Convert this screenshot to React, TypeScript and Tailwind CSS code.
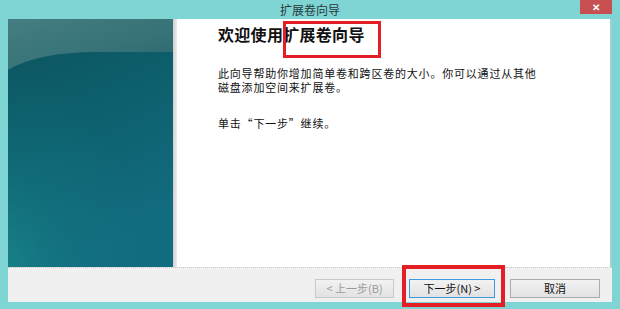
import React, { FC } from "react";

const cjk = "font-['Noto_Sans_CJK_SC','Noto_Sans',sans-serif]";

// decorative side picture of the wizard
const SidePanel: FC = () => {
	return (
		<svg width="165" height="248" viewBox="0 0 165 248" className="block">
			<defs>
				<linearGradient id="body" x1="0" y1="0" x2="0.3" y2="1">
					<stop offset="0" stopColor="#0b525c" />
					<stop offset="0.45" stopColor="#0d5f6c" />
					<stop offset="1" stopColor="#126c80" />
				</linearGradient>
				<radialGradient id="glow" cx="0" cy="1" r="0.8">
					<stop offset="0" stopColor="#188589" stopOpacity="0.8" />
					<stop offset="0.5" stopColor="#157b84" stopOpacity="0.3" />
					<stop offset="1" stopColor="#157b84" stopOpacity="0" />
				</radialGradient>
				<linearGradient id="cap" x1="0" y1="0" x2="1" y2="1">
					<stop offset="0" stopColor="#457e82" />
					<stop offset="1" stopColor="#2c6a70" />
				</linearGradient>
			</defs>
			<rect width="165" height="248" fill="url(#body)" />
			<rect width="165" height="248" fill="url(#glow)" />
			<path d="M0,51 Q30,33 90,33 L165,33 L165,0 L0,0 Z" fill="url(#cap)" />
		</svg>
	);
};

interface BtnProps {
	label: string;
	width: string;
	disabled?: boolean;
	focused?: boolean;
}

const WizButton: FC<BtnProps> = ({ label, width, disabled, focused }) => {
	return (
		<div
			className={`${width} h-[19px] flex items-center justify-center text-[11px] leading-none bg-gradient-to-b from-[#f2f2f2] to-[#e2e2e2] border ${
				focused
					? "border-[#3c9ae0] text-[#111]"
					: disabled
					? "border-[#c9c9c9] text-[#9b9b9b]"
					: "border-[#acacac] text-[#111]"
			}`}
		>
			{label}
		</div>
	);
};

const App: FC = () => {
	return (
		<div className={`relative w-[620px] h-[309px] bg-[#7fd4d4] flex flex-col overflow-hidden ${cjk}`}>
			{/* title bar */}
			<div className="h-[19px] flex items-start">
				<div className="w-[40px]" />
				<div className="flex-1 text-center text-[12px] leading-[19px] text-[#2a3a3a]">扩展卷向导</div>
				<div className="w-[32px] h-[14px] mr-[8px] bg-[#c84f4f] flex items-center justify-center text-white text-[10px] font-bold leading-none">
					✕
				</div>
			</div>

			{/* body */}
			<div className="mx-[8px] flex-1 flex flex-col">
				<div className="h-[248px] flex">
					<SidePanel />
					<div className="w-[4px] bg-gradient-to-r from-[#cfcfcf] to-[#ececec]" />
					<div className="flex-1 bg-white pl-[41px] pt-[4px] text-[#111]">
						<h1 className="text-[16px] font-bold leading-[22px] tracking-[0.3px]">欢迎使用扩展卷向导</h1>
						<div className="mt-[21px] flex flex-col text-[11px] leading-[14px] tracking-[0.8px]">
							<span>此向导帮助你增加简单卷和跨区卷的大小。你可以通过从其他</span>
							<span>磁盘添加空间来扩展卷。</span>
						</div>
						<p className="mt-[22px] text-[11px] leading-[14px] tracking-[0.8px]">单击“下一步”继续。</p>
					</div>
					<div className="w-[2px] bg-[#9fcfd0]" />
				</div>
				<div className="h-[35px] bg-[#f0f0f0] border-t border-dotted border-[#c8c8c8] flex justify-end items-start pt-[11px] pr-[12px] gap-[15px]">
					<WizButton label="< 上一步(B)" width="w-[79px]" disabled />
					<WizButton label="下一步(N) >" width="w-[86px]" focused />
					<WizButton label="取消" width="w-[90px]" />
				</div>
			</div>
			<div className="h-[7px]" />

			{/* red highlight marks */}
			<div className="absolute left-[283px] top-[21px] w-[98px] h-[37px] border-[3px] border-[#e31e24]" />
			<div className="absolute left-[402px] top-[265px] w-[103px] h-[42px] border-[4px] border-[#e31e24]" />
		</div>
	);
};

export default App;
